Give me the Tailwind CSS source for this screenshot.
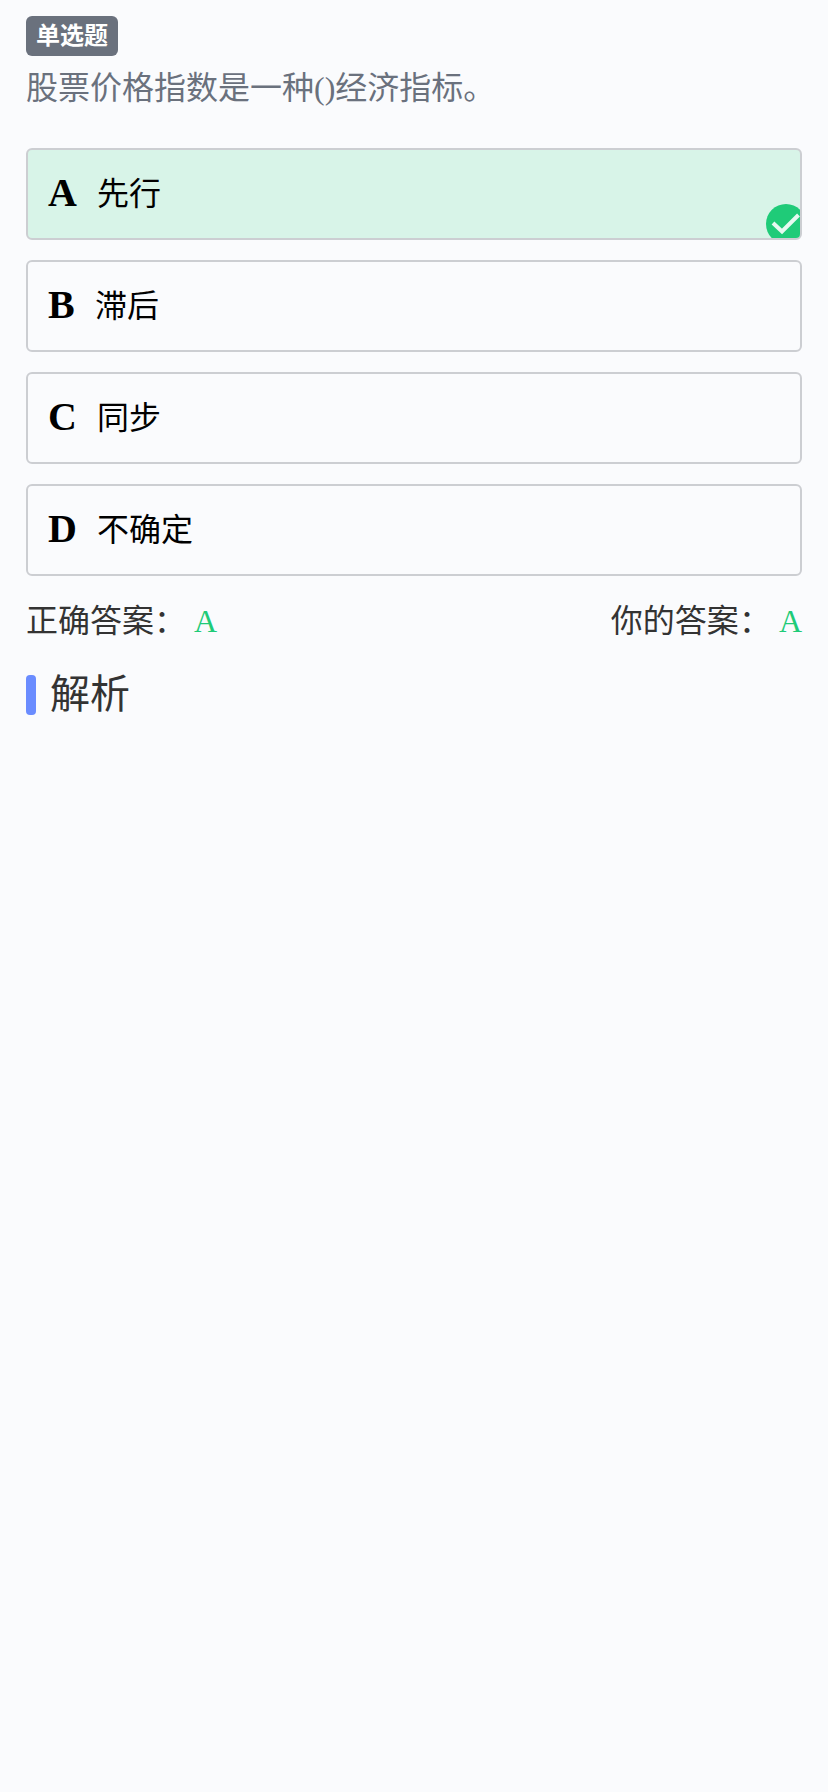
<!DOCTYPE html>
<html lang="zh-CN">
<head>
  <meta charset="UTF-8">
  <meta name="viewport" content="width=device-width, initial-scale=1.0">
  <title>单选题</title>
  <script src="https://cdn.jsdelivr.net/npm/@tailwindcss/browser@4"></script>
</head>
<body class="bg-[#fafbfd] min-h-screen font-['Liberation_Serif','Noto_Sans_CJK_SC',serif]">
  <main class="px-[26px] pt-4">
    <!-- Question -->
    <span class="flex w-[92px] h-10 items-center justify-center rounded-md bg-[#6a717d] text-white text-2xl font-bold">单选题</span>
    <p class="mt-2 text-[32px] leading-[48px] text-[#6a717d]">股票价格指数是一种()经济指标。</p>

    <!-- Options -->
    <div class="mt-[36px] flex flex-col gap-5">
      <div class="relative flex h-[92px] items-center overflow-hidden rounded-md border-2 border-[#ccced2] bg-[#d8f4e8] pl-5 text-black">
        <b class="mb-0.5 w-[49px] text-[40px]">A</b>
        <span class="text-[32px]">先行</span>
        <svg class="absolute right-0 bottom-0" width="36" height="36" viewBox="0 0 36 36">
          <circle cx="22" cy="22" r="20" fill="#1fcb78" />
          <path d="M9 21 L18 29.5 L34.5 13" fill="none" stroke="#e6f9f0" stroke-width="4" class="blur-[0.6px]" />
        </svg>
      </div>
      <div class="flex h-[92px] items-center rounded-md border-2 border-[#ccced2] pl-5 text-black">
        <b class="mb-0.5 w-[47px] text-[40px]">B</b>
        <span class="text-[32px]">滞后</span>
      </div>
      <div class="flex h-[92px] items-center rounded-md border-2 border-[#ccced2] pl-5 text-black">
        <b class="mb-0.5 w-[49px] text-[40px]">C</b>
        <span class="text-[32px]">同步</span>
      </div>
      <div class="flex h-[92px] items-center rounded-md border-2 border-[#ccced2] pl-5 text-black">
        <b class="mb-0.5 w-[49px] text-[40px]">D</b>
        <span class="text-[32px]">不确定</span>
      </div>
    </div>

    <!-- Answers -->
    <div class="mt-[18px] flex items-center justify-between text-[32px] leading-[48px] text-[#333]">
      <div>正确答案<span class="font-['Noto_Sans_CJK_TC']">：</span><span class="ml-2 text-[#1fcb78]">A</span></div>
      <div>你的答案<span class="font-['Noto_Sans_CJK_TC']">：</span><span class="ml-2 text-[#1fcb78]">A</span></div>
    </div>

    <!-- Analysis -->
    <div class="mt-[26px] flex items-center gap-[14px]">
      <span class="h-10 w-2.5 rounded-[4px] bg-[#6a8cff]"></span>
      <h2 class="text-[40px] leading-[48px] text-[#333]">解析</h2>
    </div>
  </main>
</body>
</html>
